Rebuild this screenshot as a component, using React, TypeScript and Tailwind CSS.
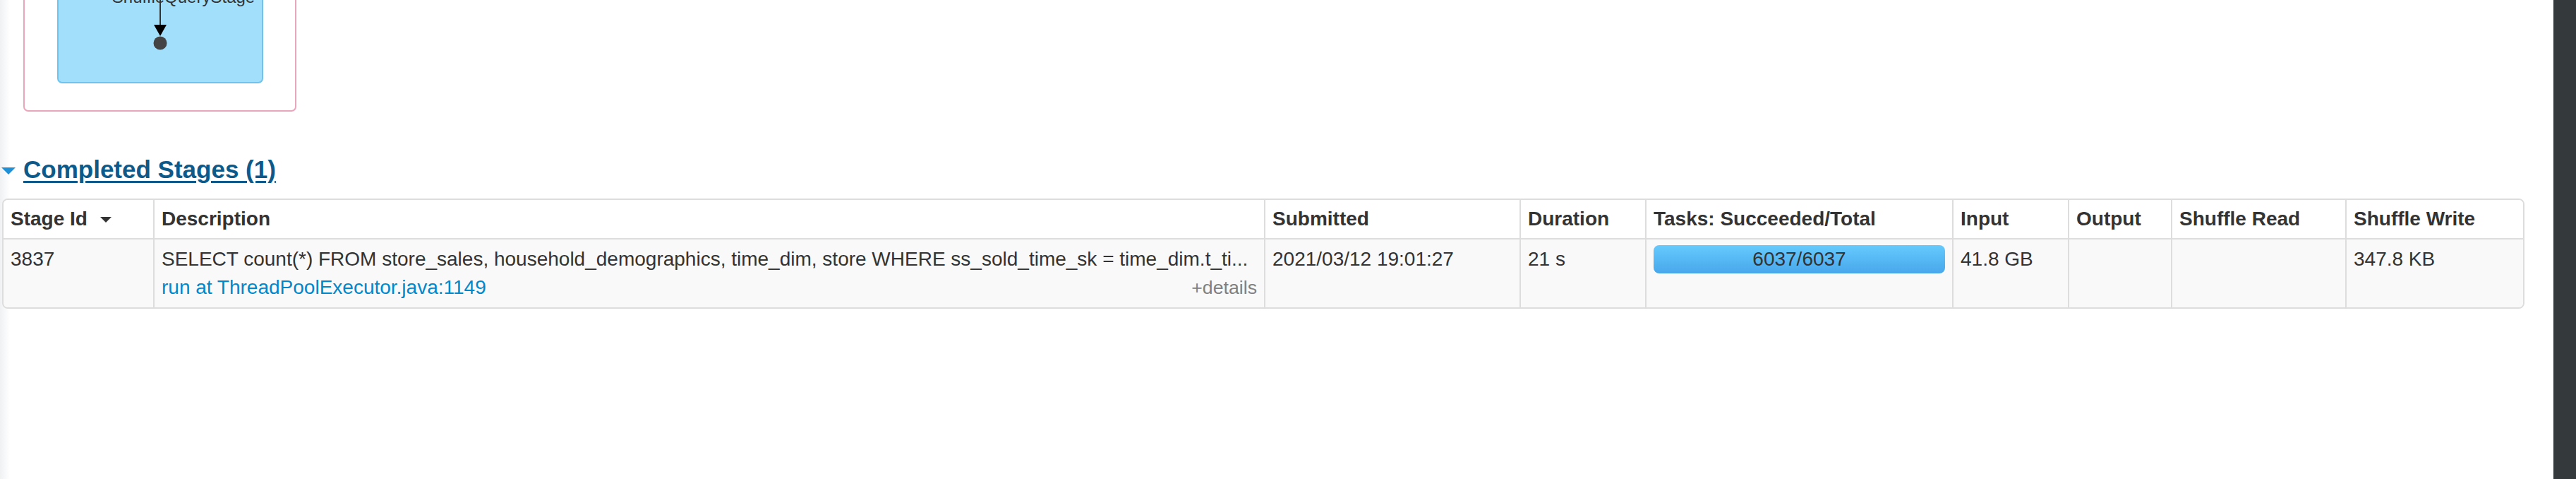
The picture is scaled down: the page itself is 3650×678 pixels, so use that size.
import React from 'react';

const font = "font-['Liberation_Sans',Arial,sans-serif]";

const headers = [
  { label: 'Stage Id', w: 'w-[212px]', sort: true },
  { label: 'Description', w: 'w-[1574px]' },
  { label: 'Submitted', w: 'w-[362px]' },
  { label: 'Duration', w: 'w-[178px]' },
  { label: 'Tasks: Succeeded/Total', w: 'w-[435px]' },
  { label: 'Input', w: 'w-[164px]' },
  { label: 'Output', w: 'w-[146px]' },
  { label: 'Shuffle Read', w: 'w-[247px]' },
  { label: 'Shuffle Write', w: 'w-[252px]' },
];

// plan graph stub, only the bottom of it is on screen
function PlanGraph() {
  return (
    <svg width="440" height="160" className="block">
      <rect x="34" y="-60" width="385" height="217" rx="6" fill="#ffffff" stroke="#e9a6ba" strokeWidth="2" />
      <rect x="82" y="-60" width="290" height="177" rx="6" fill="#a2dffb" stroke="#70c3ee" strokeWidth="2" />
      <text x="260" y="4" textAnchor="middle" fontSize="24" fill="#333333" fontFamily="'Liberation Sans', Arial, sans-serif">
        ShuffleQueryStage
      </text>
      <line x1="227" y1="-20" x2="227" y2="37" stroke="#333333" strokeWidth="2" />
      <polygon points="218,35 236,35 227,51" fill="#000000" />
      <circle cx="227" cy="61" r="9.5" fill="#444444" />
    </svg>
  );
}

function StagesTable() {
  return (
    <div className="w-[3574px] ml-[3px] border-2 border-[#dddddd] rounded-[8px] overflow-hidden text-[28px] leading-[40px] text-[#333333]">
      <div className="flex bg-white">
        {headers.map((h, i) => (
          <div
            key={h.label}
            className={`${h.w} shrink-0 px-[10px] py-[7px] font-bold whitespace-nowrap flex items-center ${i > 0 ? 'border-l-2 border-[#dddddd]' : ''}`}
          >
            {h.label}
            {h.sort && (
              <svg width="16" height="8" viewBox="0 0 16 8" className="ml-[18px] mt-[2px]">
                <polygon points="0,0 16,0 8,8" fill="#333333" />
              </svg>
            )}
          </div>
        ))}
      </div>
      <div className="flex bg-[#f9f9f9] border-t-2 border-[#dddddd]">
        <div className="w-[212px] shrink-0 px-[10px] py-[8px]">3837</div>
        <div className="w-[1574px] shrink-0 px-[10px] py-[8px] border-l-2 border-[#dddddd]">
          <div className="whitespace-nowrap">
            SELECT count(*) FROM store_sales, household_demographics, time_dim, store WHERE ss_sold_time_sk = time_dim.t_ti...
          </div>
          <div className="flex justify-between items-baseline">
            <span className="text-[#0088cc]">run at ThreadPoolExecutor.java:1149</span>
            <span className="text-[26.7px] text-[#808080]">+details</span>
          </div>
        </div>
        <div className="w-[362px] shrink-0 px-[10px] py-[8px] border-l-2 border-[#dddddd]">2021/03/12 19:01:27</div>
        <div className="w-[178px] shrink-0 px-[10px] py-[8px] border-l-2 border-[#dddddd]">21 s</div>
        <div className="w-[435px] shrink-0 px-[10px] py-[8px] border-l-2 border-[#dddddd]">
          <div className="h-[40px] rounded-[8px] bg-gradient-to-b from-[#66cafd] to-[#48a7eb] text-center">6037/6037</div>
        </div>
        <div className="w-[164px] shrink-0 px-[10px] py-[8px] border-l-2 border-[#dddddd]">41.8 GB</div>
        <div className="w-[146px] shrink-0 px-[10px] py-[8px] border-l-2 border-[#dddddd]"></div>
        <div className="w-[247px] shrink-0 px-[10px] py-[8px] border-l-2 border-[#dddddd]"></div>
        <div className="w-[252px] shrink-0 px-[10px] py-[8px] border-l-2 border-[#dddddd]">347.8 KB</div>
      </div>
    </div>
  );
}

export default function App() {
  return (
    <div className={`flex h-[678px] w-[3650px] overflow-hidden ${font}`}>
      <div className="w-[3618px] shrink-0 bg-[linear-gradient(to_right,#eff1f3,#ffffff_14px)]">
        <PlanGraph />
        <div className="mt-[60px] flex items-center h-[40px]">
          <svg width="20" height="10" viewBox="0 0 20 10" className="ml-[2px] mt-[3px]">
            <polygon points="0,0 20,0 10,10" fill="#1f8fd6" />
          </svg>
          <a className="ml-[11px] text-[35px] font-bold text-[#0d5a8a] underline decoration-[3px] underline-offset-[4px]">
            Completed Stages (1)
          </a>
        </div>
        <div className="mt-[21px]">
          <StagesTable />
        </div>
      </div>
      <div className="flex-1 bg-[#343a3c]"></div>
    </div>
  );
}
